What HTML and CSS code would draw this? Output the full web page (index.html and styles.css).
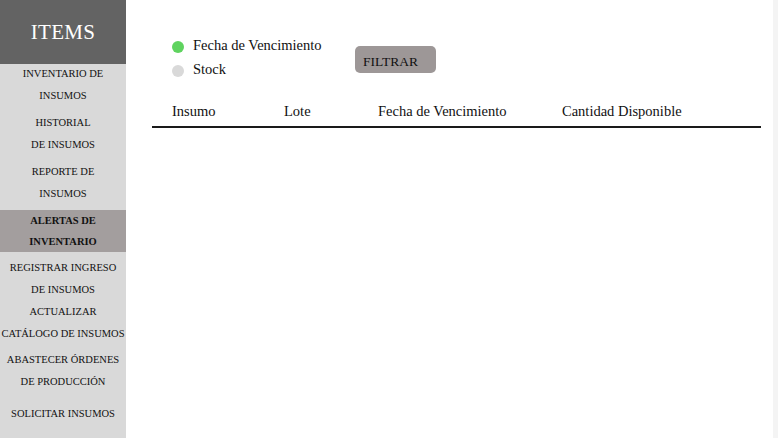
FILE: index.html
```html
<!DOCTYPE html>
<html lang="es">
<head>
<meta charset="utf-8">
<title>Alertas de inventario</title>
<link rel="stylesheet" href="styles.css">
</head>
<body>
<div class="app">
  <aside class="sidebar">
    <div class="brand">ITEMS</div>
    <nav class="nav">
      <a class="nav-item first">INVENTARIO DE<br>INSUMOS</a>
      <a class="nav-item">HISTORIAL<br>DE INSUMOS</a>
      <a class="nav-item">REPORTE DE<br>INSUMOS</a>
      <a class="nav-item active">ALERTAS DE<br>INVENTARIO</a>
      <a class="nav-item">REGISTRAR INGRESO<br>DE INSUMOS</a>
      <a class="nav-item tight">ACTUALIZAR<br>CATÁLOGO DE INSUMOS</a>
      <a class="nav-item near">ABASTECER ÓRDENES<br>DE PRODUCCIÓN</a>
      <a class="nav-item last">SOLICITAR INSUMOS</a>
    </nav>
  </aside>
  <main class="main">
    <div class="filters">
      <div class="options">
        <label class="option"><span class="dot on"></span>Fecha de Vencimiento</label>
        <label class="option"><span class="dot"></span>Stock</label>
      </div>
      <button class="btn">FILTRAR</button>
    </div>
    <div class="table-head">
      <span class="col c1">Insumo</span>
      <span class="col c2">Lote</span>
      <span class="col c3">Fecha de Vencimiento</span>
      <span class="col c4">Cantidad Disponible</span>
    </div>
  </main>
  <div class="edge"></div>
</div>
</body>
</html>
```
FILE: styles.css
```css
html, body {
  margin: 0;
  padding: 0;
  background: #ffffff;
}
body {
  font-family: "Liberation Serif", "Times New Roman", serif;
  color: #111;
}
.app {
  display: flex;
  width: 778px;
  height: 438px;
}
.sidebar {
  width: 126px;
  flex: none;
  background: #d9d9d9;
  display: flex;
  flex-direction: column;
}
.brand {
  height: 64px;
  background: #636363;
  color: #fff;
  font-size: 21px;
  display: flex;
  align-items: center;
  justify-content: center;
  letter-spacing: 0.3px;
}
.nav {
  display: flex;
  flex-direction: column;
  gap: 5px;
  margin-top: -2px;
}
.nav-item {
  display: block;
  text-align: center;
  font-size: 10.5px;
  line-height: 22px;
  color: #111;
  white-space: nowrap;
}
.nav-item.first {
  padding-top: 1px;
}
.nav-item.active {
  background: #a39e9e;
  font-weight: bold;
  line-height: 21px;
}
.nav-item.tight {
  margin-top: -5px;
}
.nav-item.near {
  margin-top: -1px;
}
.nav-item.last {
  margin-top: 5px;
}
.main {
  flex: 1;
  padding: 34px 12px 0 26px;
}
.filters {
  display: flex;
  align-items: flex-start;
  padding-left: 20px;
}
.options {
  display: flex;
  flex-direction: column;
  gap: 1px;
  width: 183px;
}
.option {
  display: flex;
  align-items: center;
  font-size: 14.5px;
  line-height: 23px;
}
.dot {
  width: 12px;
  height: 12px;
  border-radius: 50%;
  background: #d9d9d9;
  margin-right: 9px;
  margin-top: 2px;
}
.dot.on {
  background: #5fd35f;
}
.btn {
  margin-top: 12px;
  width: 81px;
  height: 27px;
  border: none;
  border-radius: 5px;
  background: #9d9797;
  font-family: "Liberation Serif", "Times New Roman", serif;
  font-size: 13.5px;
  color: #111;
  text-align: left;
  padding: 5px 0 0 8px;
}
.table-head {
  display: flex;
  margin-top: 20px;
  border-bottom: 2px solid #1a1a1a;
  padding-bottom: 5px;
  font-size: 14.5px;
  line-height: 20px;
}
.col { display: block; }
.c1 { padding-left: 20px; width: 112px; }
.c2 { width: 94px; }
.c3 { width: 184px; }
.edge {
  width: 5px;
  flex: none;
  background: #f4f4f4;
}
```
